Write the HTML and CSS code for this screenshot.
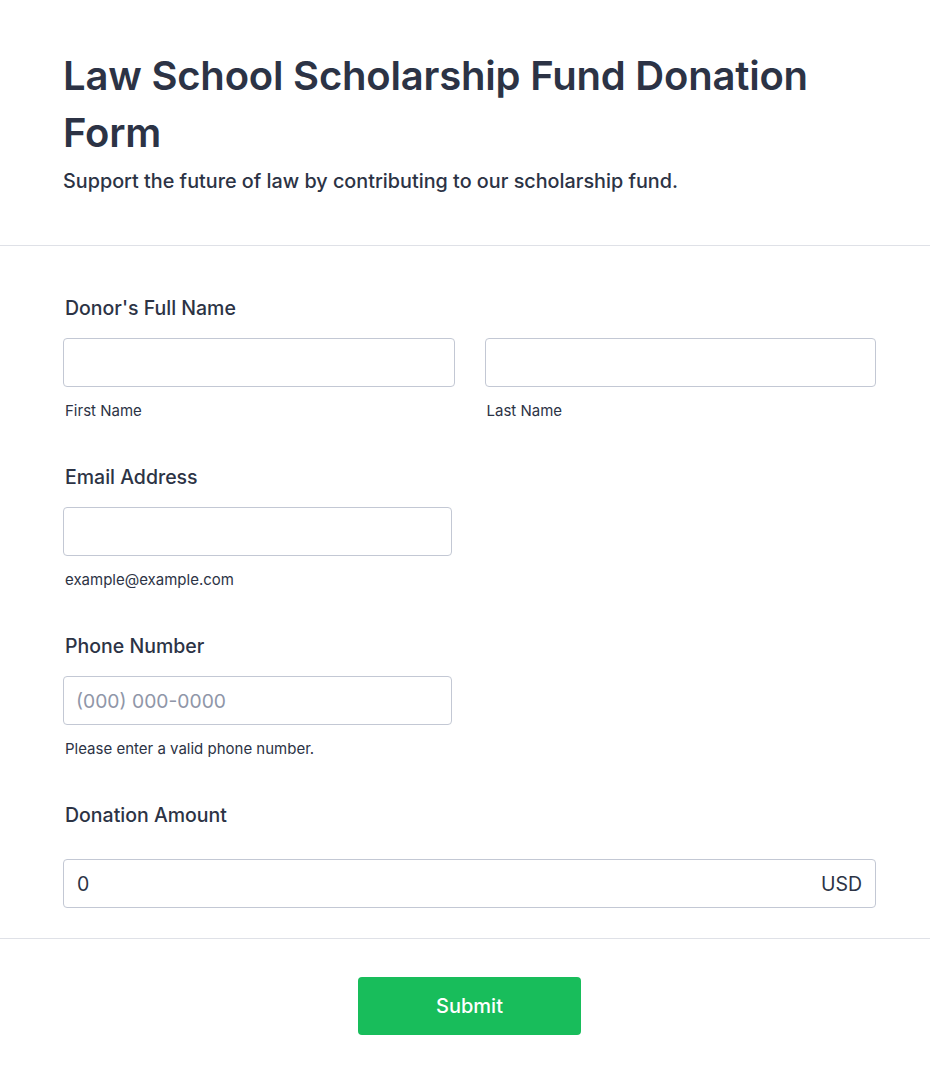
FILE: index.html
```html
<!DOCTYPE html>
<html lang="en">
<head>
    <meta charset="UTF-8">
    <meta name="viewport" content="width=device-width, initial-scale=1.0">
    <title>Law School Scholarship Fund Donation Form</title>
    <link rel="stylesheet" href="styles.css">
</head>
<body>
    <header class="form-header">
        <h1>Law School Scholarship Fund Donation Form</h1>
        <p class="subtitle">Support the future of law by contributing to our scholarship fund.</p>
    </header>

    <form class="form-body">
        <div class="field">
            <label class="field-label">Donor's Full Name</label>
            <div class="name-row">
                <div class="name-part">
                    <input type="text" class="input">
                    <span class="sublabel">First Name</span>
                </div>
                <div class="name-part">
                    <input type="text" class="input">
                    <span class="sublabel">Last Name</span>
                </div>
            </div>
        </div>

        <div class="field">
            <label class="field-label">Email Address</label>
            <input type="email" class="input input-half">
            <span class="sublabel">example@example.com</span>
        </div>

        <div class="field">
            <label class="field-label">Phone Number</label>
            <input type="tel" class="input input-half" placeholder="(000) 000-0000">
            <span class="sublabel">Please enter a valid phone number.</span>
        </div>

        <div class="field field-last">
            <label class="field-label">Donation Amount</label>
            <div class="amount-box">
                <input type="text" class="amount-input" value="0">
                <span class="currency">USD</span>
            </div>
        </div>
    </form>

    <div class="form-footer">
        <button type="button" class="btn-submit">Submit</button>
    </div>
</body>
</html>
```

FILE: styles.css
```css
:root {
    --text-main: #2c3345;
    --border: #c3c8d4;
    --divider: #dfe1e7;
    --green: #18bd5b;
}

* {
    margin: 0;
    padding: 0;
    box-sizing: border-box;
}

body {
    font-family: Inter, 'Noto Sans', sans-serif;
    color: var(--text-main);
    background: #fff;
}

.form-header {
    padding: 47px 54px 53px 63px;
    border-bottom: 1px solid var(--divider);
}

.form-header h1 {
    font-size: 40px;
    font-weight: 600;
    line-height: 57px;
    letter-spacing: -0.2px;
}

.subtitle {
    font-size: 19.8px;
    font-weight: 500;
    line-height: 22px;
    margin-top: 9px;
}

.form-body {
    padding: 50px 54px 30px 63px;
}

.field {
    margin-bottom: 45px;
}

.field-last {
    margin-bottom: 0;
}

.field-label {
    display: block;
    font-size: 19.5px;
    font-weight: 500;
    line-height: 24px;
    padding-left: 2px;
    margin-bottom: 18px;
}

.name-row {
    display: flex;
    gap: 30px;
}

.name-part {
    flex: 1;
}

.input {
    display: block;
    width: 100%;
    height: 49px;
    border: 1px solid var(--border);
    border-radius: 4px;
    padding: 0 12px;
    font-family: inherit;
    font-size: 19.3px;
    color: var(--text-main);
    outline: none;
}

.input-half {
    width: 389px;
}

.input::placeholder {
    color: #8f96a8;
}

.sublabel {
    display: block;
    font-size: 15px;
    line-height: 18px;
    padding-left: 2px;
    margin-top: 15px;
}

.amount-box {
    display: flex;
    align-items: center;
    height: 49px;
    border: 1px solid var(--border);
    border-radius: 4px;
    padding: 0 13px 0 13px;
    margin-top: 32px;
}

.amount-input {
    flex: 1;
    border: none;
    outline: none;
    font-family: inherit;
    font-size: 19.5px;
    color: var(--text-main);
}

.currency {
    font-size: 19.5px;
}

.form-footer {
    border-top: 1px solid var(--divider);
    display: flex;
    justify-content: center;
    padding: 38px 54px 50px 63px;
}

.btn-submit {
    width: 223px;
    height: 58px;
    background: var(--green);
    color: #fff;
    border: none;
    border-radius: 4px;
    font-family: inherit;
    font-size: 20px;
    font-weight: 500;
    cursor: pointer;
}
```
